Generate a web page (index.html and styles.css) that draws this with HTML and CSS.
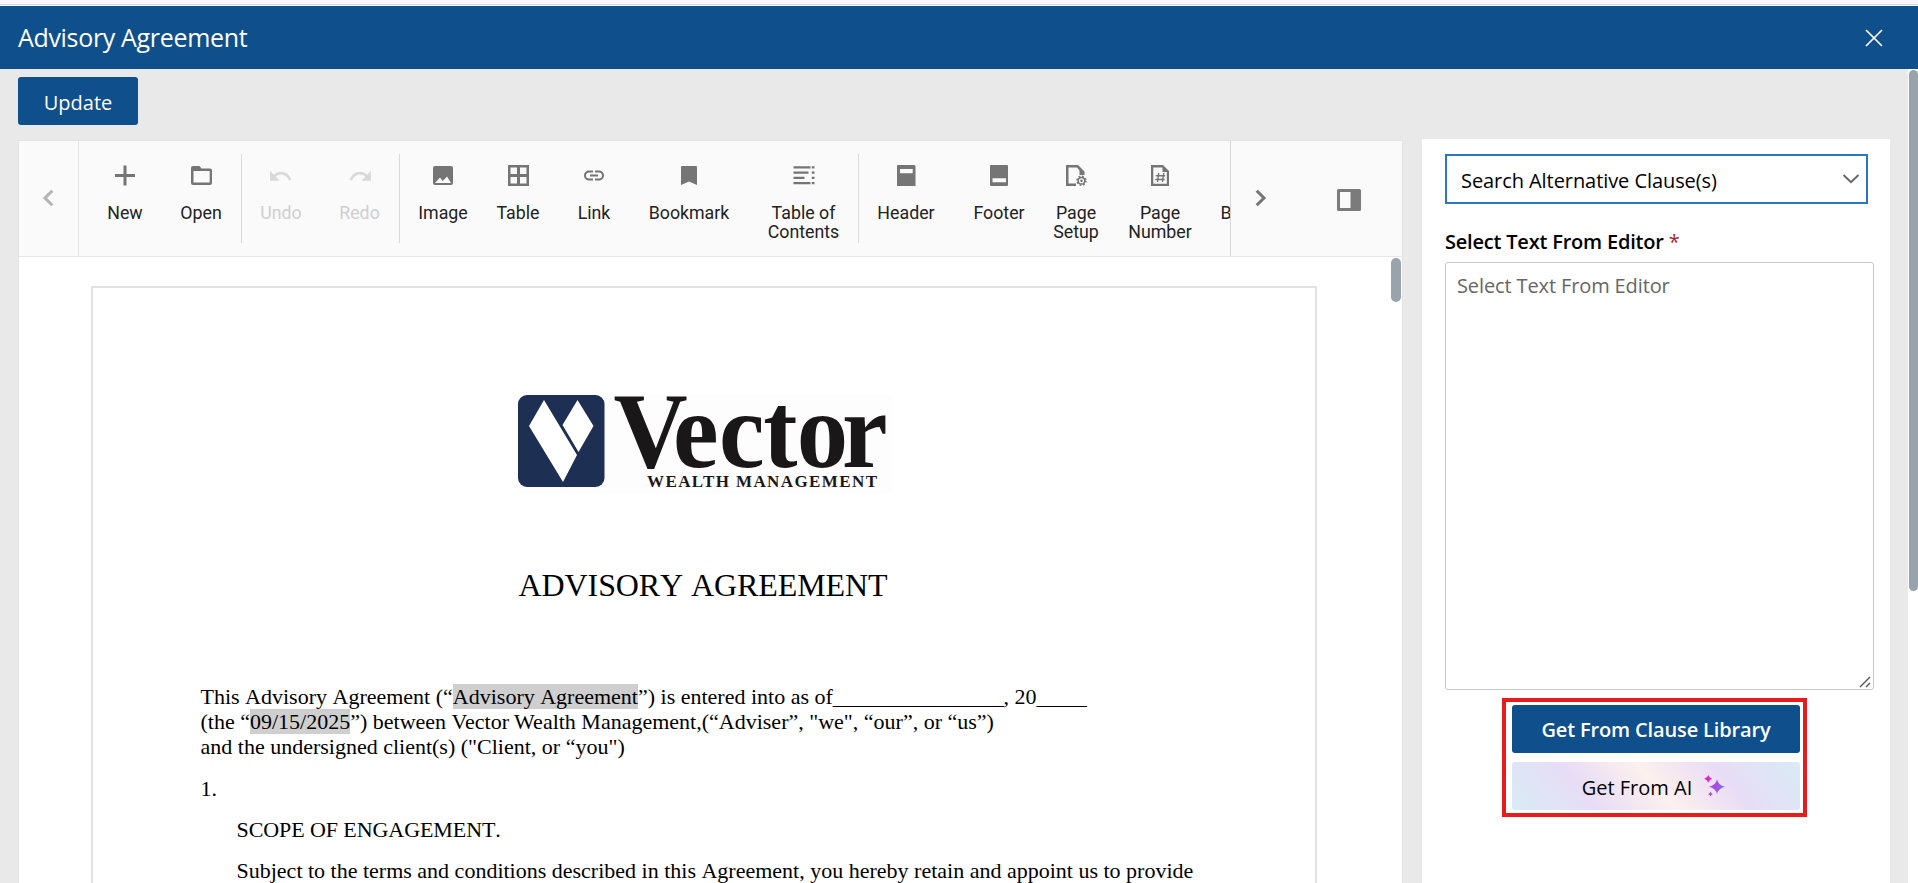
FILE: index.html
```
<!DOCTYPE html>
<html lang="en">
<head>
<meta charset="utf-8">
<title>Advisory Agreement</title>
<link rel="stylesheet" href="styles.css">
</head>
<body>
<div class="top-strip"></div>
<header class="dialog-header">
  <h1 class="dialog-title">Advisory Agreement</h1>
  <svg class="close" width="18" height="18" viewBox="0 0 18 18"><path d="M1 1l16 16M17 1L1 17" stroke="#fff" stroke-width="1.7" fill="none"/></svg>
</header>
<div class="dialog-body">
  <main class="content">
    <div class="actions"><button class="btn update">Update</button></div>
    <div class="columns">
      <section class="editor">
        <div class="toolbar">
          <div class="nav prev"><svg width="12" height="18" viewBox="0 0 12 18"><path d="M10.3 1.7L3 9l7.300 7.300" fill="none" stroke="#b3b3b3" stroke-width="3"/></svg></div>
          <div class="tools">
            <div class="tool w76"><svg class="icon" viewBox="0 0 24 24"><path d="M10.500 2.500h3V11h8.500v3h-8.500v8.500h-3V14H2v-3h8.500z"/></svg>New</div>
            <div class="tool w76"><svg class="icon" viewBox="0 0 24 24"><path fill-rule="evenodd" d="M4 3h6.500l2 2.500H21a2 2 0 0 1 2 2V20a2 2 0 0 1-2 2H4a2 2 0 0 1-2-2V5a2 2 0 0 1 2-2zM4.500 8v11.500h16.200V8z"/></svg>Open</div>
            <div class="sep after-open"></div>
            <div class="tool w78 disabled"><svg class="icon" viewBox="0 0 24 24"><path transform="translate(-1 -.2) scale(1.04 1.12)" d="M12.500 8c-2.650 0-5.050.99-6.900 2.600L2 7v9h9l-3.620-3.620c1.390-1.160 3.160-1.880 5.120-1.880 3.540 0 6.550 2.310 7.600 5.500l2.370-.78C21.080 11.030 17.150 8 12.500 8z"/></svg>Undo</div>
            <div class="tool w79 disabled"><svg class="icon" viewBox="0 0 24 24"><path transform="translate(25 -.2) scale(-1.04 1.12)" d="M12.500 8c-2.650 0-5.050.99-6.900 2.600L2 7v9h9l-3.620-3.620c1.390-1.160 3.160-1.880 5.120-1.880 3.540 0 6.550 2.310 7.600 5.500l2.370-.78C21.080 11.030 17.150 8 12.500 8z"/></svg>Redo</div>
            <div class="sep"></div>
            <div class="tool w86"><svg class="icon" viewBox="0 0 24 24"><path fill-rule="evenodd" d="M4 3h16a2 2 0 0 1 2 2v15a2 2 0 0 1-2 2H4a2 2 0 0 1-2-2V5a2 2 0 0 1 2-2zM4 20h16l-4-6.500-4.200 4.500L9 14.500z"/></svg>Image</div>
            <div class="tool w64"><svg class="icon" viewBox="0 0 24 24"><path fill-rule="evenodd" d="M2 2h21v21H2zM4.500 4.500v6.500h6.500V4.500zM14 4.500v6.500h6.500V4.500zM4.500 14v6.500h6.500V14zM14 14v6.500h6.500V14z"/></svg>Table</div>
            <div class="tool w88"><svg class="icon" viewBox="0 0 24 24"><path transform="translate(0 .5)" d="M3.900 12c0-1.710 1.390-3.100 3.100-3.100h4V7H7c-2.760 0-5 2.240-5 5s2.240 5 5 5h4v-1.900H7c-1.710 0-3.100-1.390-3.100-3.100zM8 13h8v-2H8v2zm9-6h-4v1.900h4c1.710 0 3.100 1.390 3.100 3.100s-1.390 3.100-3.100 3.100h-4V17h4c2.760 0 5-2.240 5-5s-2.240-5-5-5z"/></svg>Link</div>
            <div class="tool w102"><svg class="icon" viewBox="0 0 24 24"><path d="M5 3h14a1 1 0 0 1 1 1v18l-8-3.500L4 22V4a1 1 0 0 1 1-1z"/></svg>Bookmark</div>
            <div class="tool w109"><svg class="icon" viewBox="0 0 24 24"><path d="M1.500 3.200h17v2.300h-17zM1.500 8.500h15v2.300h-15zM1.500 13.700h11v2.300h-11zM1.500 19h17v2.300h-17zM19.800 3.200h2.700v2.300h-2.700zM19.800 8.500h2.700v2.300h-2.700zM19.800 13.700h2.700v2.300h-2.700zM19.800 19h2.700v2.300h-2.700z"/></svg>Table of<br>Contents</div>
            <div class="sep"></div>
            <div class="tool w94"><svg class="icon" viewBox="0 0 24 24"><path fill-rule="evenodd" d="M4 2h16a1.500 1.500 0 0 1 1.500 1.500V23H3V3a1 1 0 0 1 1-1zM6 6v4.200h12.700V6z"/></svg>Header</div>
            <div class="tool w92"><svg class="icon" viewBox="0 0 24 24"><path fill-rule="evenodd" d="M4 2h16a1 1 0 0 1 1 1v19a1 1 0 0 1-1 1H4a1 1 0 0 1-1-1V3a1 1 0 0 1 1-1zM5.500 15.200v4h13.500v-4z"/></svg>Footer</div>
            <div class="tool w62"><svg class="icon" viewBox="0 0 24 24"><path d="M2 2h12l6.500 6.500V12h-5V7.500L13 4.500H4.500v16H12V23H2z"/><circle cx="17.500" cy="17.700" r="3.300" fill="none" stroke="#757575" stroke-width="1.500"/><circle cx="17.500" cy="17.700" r="4.500" fill="none" stroke="#757575" stroke-width="1.500" stroke-dasharray="1.770 1.770"/><circle cx="17.500" cy="17.700" r="1.300"/></svg>Page<br>Setup</div>
            <div class="tool w106"><svg class="icon" viewBox="0 0 24 24"><path fill-rule="evenodd" d="M3 2h12l6 6v15H3zM5.300 4.500v16.200h13.500V9h-4.300V4.500z"/><path d="M10.700 10l-1.200 9M15.700 10l-1.200 9M7.700 12.700h9.500M7.200 16.500h9.500" fill="none" stroke="#757575" stroke-width="1.400"/></svg>Page<br>Number</div>
            <div class="tool clipped"><span class="icon"></span>Break</div>
          </div>
          <div class="nav next"><svg width="12" height="18" viewBox="0 0 12 18"><path d="M1.700 1.700L9 9l-7.300 7.300" fill="none" stroke="#757575" stroke-width="3"/></svg></div>
          <div class="pane"><svg width="24" height="22" viewBox="0 0 24 22"><path fill="#7b7b7b" fill-rule="evenodd" d="M1.500 0h21A1.500 1.500 0 0 1 24 1.500v19a1.500 1.500 0 0 1-1.500 1.500h-21A1.500 1.500 0 0 1 0 20.500v-19A1.500 1.500 0 0 1 1.500 0zM3 3v16h10.500V3z"/></svg></div>
        </div>
        <div class="viewport">
          <article class="page">
            <svg class="logo" width="374" height="100" viewBox="0 0 374 100">
              <rect width="374" height="100" fill="#fefdfd"/>
              <rect x="0" y="1" width="86.500" height="92" rx="9" fill="#1d2f52"/>
              <path d="M26 6L59 61 45 88 11 32zM59.500 6L75.500 32 60.500 58 44.500 31z" fill="#fff"/>
              <text class="logo-name" transform="scale(.96 1)" y="73" x="99.500 161.500 209.500 255.500 290.500 337.500">Vector</text>
              <text class="logo-tag" x="129" y="93" textLength="230" lengthAdjust="spacing">WEALTH MANAGEMENT</text>
            </svg>
            <h2 class="doc-title">ADVISORY AGREEMENT</h2>
            <p class="intro">This Advisory Agreement (“<span class="field">Advisory Agreement</span>”) is entered into as of<span class="blank-long">________________</span>, 20<span class="blank-short">_____</span><br>(the “<span class="field">09/15/2025</span>”) between <span class="kerned">Vector Wealth Management</span>,(“Adviser”, "we", “our”, or “us”)<br>and the undersigned client(s) ("Client, or “you")</p>
            <p>1.</p>
            <p class="indent heading">SCOPE OF ENGAGEMENT.</p>
            <p class="indent">Subject to the terms and conditions described in this Agreement, you hereby retain and appoint us to provide</p>
          </article>
          <div class="doc-scroll"></div>
        </div>
      </section>
      <aside class="panel">
        <div class="select"><span class="select-text">Search Alternative Clause(s)</span><svg width="18" height="10" viewBox="0 0 18 10"><path d="M1.500 1L9 8.200 16.500 1" fill="none" stroke="#666" stroke-width="1.900"/></svg></div>
        <div class="label">Select Text From Editor <span class="required">*</span></div>
        <div class="textarea"><span class="placeholder">Select Text From Editor</span><svg class="grip" width="12" height="12" viewBox="0 0 12 12"><path d="M1 11L11 1M7 11l4-4" fill="none" stroke="#555" stroke-width="1.400"/></svg></div>
        <div class="highlight">
          <button class="btn library">Get From Clause Library</button>
          <button class="btn ai"><span class="ai-text">Get From AI</span><svg width="22" height="22" viewBox="0 0 22 22">
            <defs><linearGradient id="spark" gradientUnits="userSpaceOnUse" x1="0" y1="4" x2="22" y2="14"><stop offset="0" stop-color="#f414cf"/><stop offset=".5" stop-color="#b044df"/><stop offset="1" stop-color="#6f79f2"/></linearGradient></defs>
            <path fill="url(#spark)" d="M13 4.200q1.200 6 8 7.500-6.800 1.500-8 7.500-1.200-6-8-7.500 6.800-1.500 8-7.500zM4.200 0q.8 3.100 4 3.800-3.200.8-4 4-.8-3.200-4-4 3.200-.7 4-3.800zM6.500 16.800q.5 1.900 2.300 2.400-1.800.5-2.300 2.400-.5-1.900-2.300-2.400 1.800-.5 2.300-2.400z"/></svg></button>
        </div>
      </aside>
    </div>
  </main>
  <div class="scroll-track"><div class="scroll-thumb"></div></div>
</div>
</body>
</html>
```
FILE: styles.css
```
* { box-sizing: border-box; }
body {
  margin: 0;
  height: 883px;
  overflow: hidden;
  display: flex;
  flex-direction: column;
  background: #e9e9e9;
  font-family: "Open Sans", sans-serif;
  font-size: 20px;
  color: #000;
}
h1, h2, p { margin: 0; font-weight: 400; }
.top-strip { height: 6px; flex: none; background: #fff; box-shadow: inset 0 4px #fcf5fe, inset 0 5px #dcd6de; }
.dialog-header {
  height: 63px;
  flex: none;
  display: flex;
  align-items: center;
  justify-content: space-between;
  padding: 0 35px 0 18px;
  background: #0f4f8b;
}
.dialog-title { color: #fff; font-size: 25px; letter-spacing: -.33px; line-height: 34px; padding-bottom: 2px; }
.dialog-body { flex: 1; min-height: 0; display: flex; }
.content { flex: 1; min-width: 0; display: flex; flex-direction: column; }
.actions { height: 70px; flex: none; padding: 8px 0 0 18px; }
.btn {
  display: flex;
  align-items: center;
  justify-content: center;
  height: 48px;
  border: 0;
  border-radius: 3px;
  padding: 0;
  font: 400 20px "Open Sans", sans-serif;
  color: #fff;
  background: #0f4f8b;
}
.update { width: 120px; padding-top: 2px; }
.columns { flex: 1; min-height: 0; display: flex; gap: 19px; padding-left: 18px; }
.editor {
  width: 1385px;
  margin-top: 1px;
  border: 1px solid #e3e3e3;
  border-bottom: 0;
  background: #fff;
  display: flex;
  flex-direction: column;
}
.toolbar { height: 116px; flex: none; display: flex; background: #fafafa; border-bottom: 1px solid #e8e8e8; }
.nav { flex: none; display: flex; align-items: center; justify-content: center; }
.prev { width: 60px; border-right: 1px solid #e3e3e3; }
.next { width: 60px; border-left: 1px solid #d6d6d6; }
.next svg { margin-top: -1px; }
.prev svg { margin: -1px 1px 0 0; }
.pane { flex: 1; min-width: 0; display: flex; align-items: center; padding: 3px 0 0 47px; }
.tools { flex: none; width: 1151px; overflow: hidden; display: flex; padding-left: 8px; }
.tool {
  flex: none;
  display: flex;
  flex-direction: column;
  align-items: center;
  padding-top: 22px;
  font: 17.8px/19px Roboto, sans-serif;
  text-align: center;
  color: #222;
}
.icon { width: 24px; height: 24px; flex: none; margin-bottom: 16px; fill: #757575; }
.disabled { color: #cfcfcf; }
.disabled .icon { fill: #d9d9d9; }
.sep { width: 1px; height: 89px; flex: none; margin-top: 13px; background: #dadada; }
.after-open { margin-left: 2px; }
.w76 { width: 76px; }
.w78 { width: 78px; }
.w79 { width: 79px; }
.w86 { width: 86px; }
.w64 { width: 64px; }
.w88 { width: 88px; }
.w102 { width: 102px; }
.w109 { width: 109px; margin-left: 9px; }
.w94 { width: 94px; }
.w92 { width: 92px; }
.w62 { width: 62px; }
.w106 { width: 106px; }
.clipped { margin-left: 7.500px; }
.viewport { flex: 1; min-height: 0; overflow: hidden; display: flex; justify-content: space-between; padding: 29px 1px 0 72px; }
.page {
  width: 1226px;
  height: 1500px;
  border: 2px solid #e2e2e2;
  padding: 106px 0 0 107.500px;
  font: 22px/25.3px "Liberation Serif", serif;
  font-kerning: none;
  white-space: nowrap;
}
.kerned { font-kerning: normal; }
.doc-scroll { width: 10px; height: 44px; margin-top: -28px; border-radius: 5px; background: #98a3ac; }
.logo { display: block; margin-left: 317px; overflow: visible; }
.logo-name { font: bold 107px "Liberation Serif", serif; fill: #1a1718; }
.logo-tag { font: bold 17px "Liberation Serif", serif; fill: #1a1718; }
.doc-title { width: 1005px; margin: 73px 0 79.500px; text-align: center; font-size: 32px; line-height: 37px; letter-spacing: -.1px; }
.page p { margin-bottom: 15.800px; }
.page .intro { margin-bottom: 16.200px; }
.page .indent { padding-left: 36px; }
.page .heading { letter-spacing: -.08px; }
.field { background: #cfcfcf; }
.blank-long { letter-spacing: -.33px; }
.blank-short { letter-spacing: -1.200px; }
.panel { width: 468px; background: #fff; padding: 15px 0 0 23px; }
.select {
  width: 423px;
  height: 50px;
  border: 2px solid #2a76bf;
  display: flex;
  align-items: center;
  justify-content: space-between;
  padding: 0 6px 0 14px;
}
.select-text { letter-spacing: -.07px; padding-top: 3px; }
.label { margin-top: 24px; height: 34px; line-height: 27px; font-weight: 600; letter-spacing: -.2px; }
.required { color: #a4262c; font-weight: 400; }
.textarea { position: relative; width: 429px; height: 428px; border: 1px solid #c8c8c8; border-radius: 3px; padding: 8px 11px; color: #666; }
.placeholder { display: block; line-height: 29px; letter-spacing: -.12px; }
.grip { position: absolute; right: 2px; bottom: 1px; }
.highlight {
  width: 305px;
  height: 119px;
  margin: 8px 0 0 57px;
  border: 4px solid #e81c1c;
  padding: 3px 0 0 6px;
  display: flex;
  flex-direction: column;
  gap: 9px;
}
.highlight .btn { width: 288px; }
.library { font-weight: 600; letter-spacing: -.14px; }
.ai {
  color: #000;
  background: linear-gradient(50deg, #d8ebf6, #e8ddf6 27%, #fdf0ee 50%, #e8ddf6 73%, #d8ebf6);
}
.ai-text { padding-top: 2px; margin-right: 12px; }
.highlight .ai { padding-right: 4px; }
.scroll-track { width: 10px; background: #fff; padding: 1px 0 0 1px; }
.scroll-thumb { height: 521px; border-radius: 5px; background: #98a3ac; }
```
